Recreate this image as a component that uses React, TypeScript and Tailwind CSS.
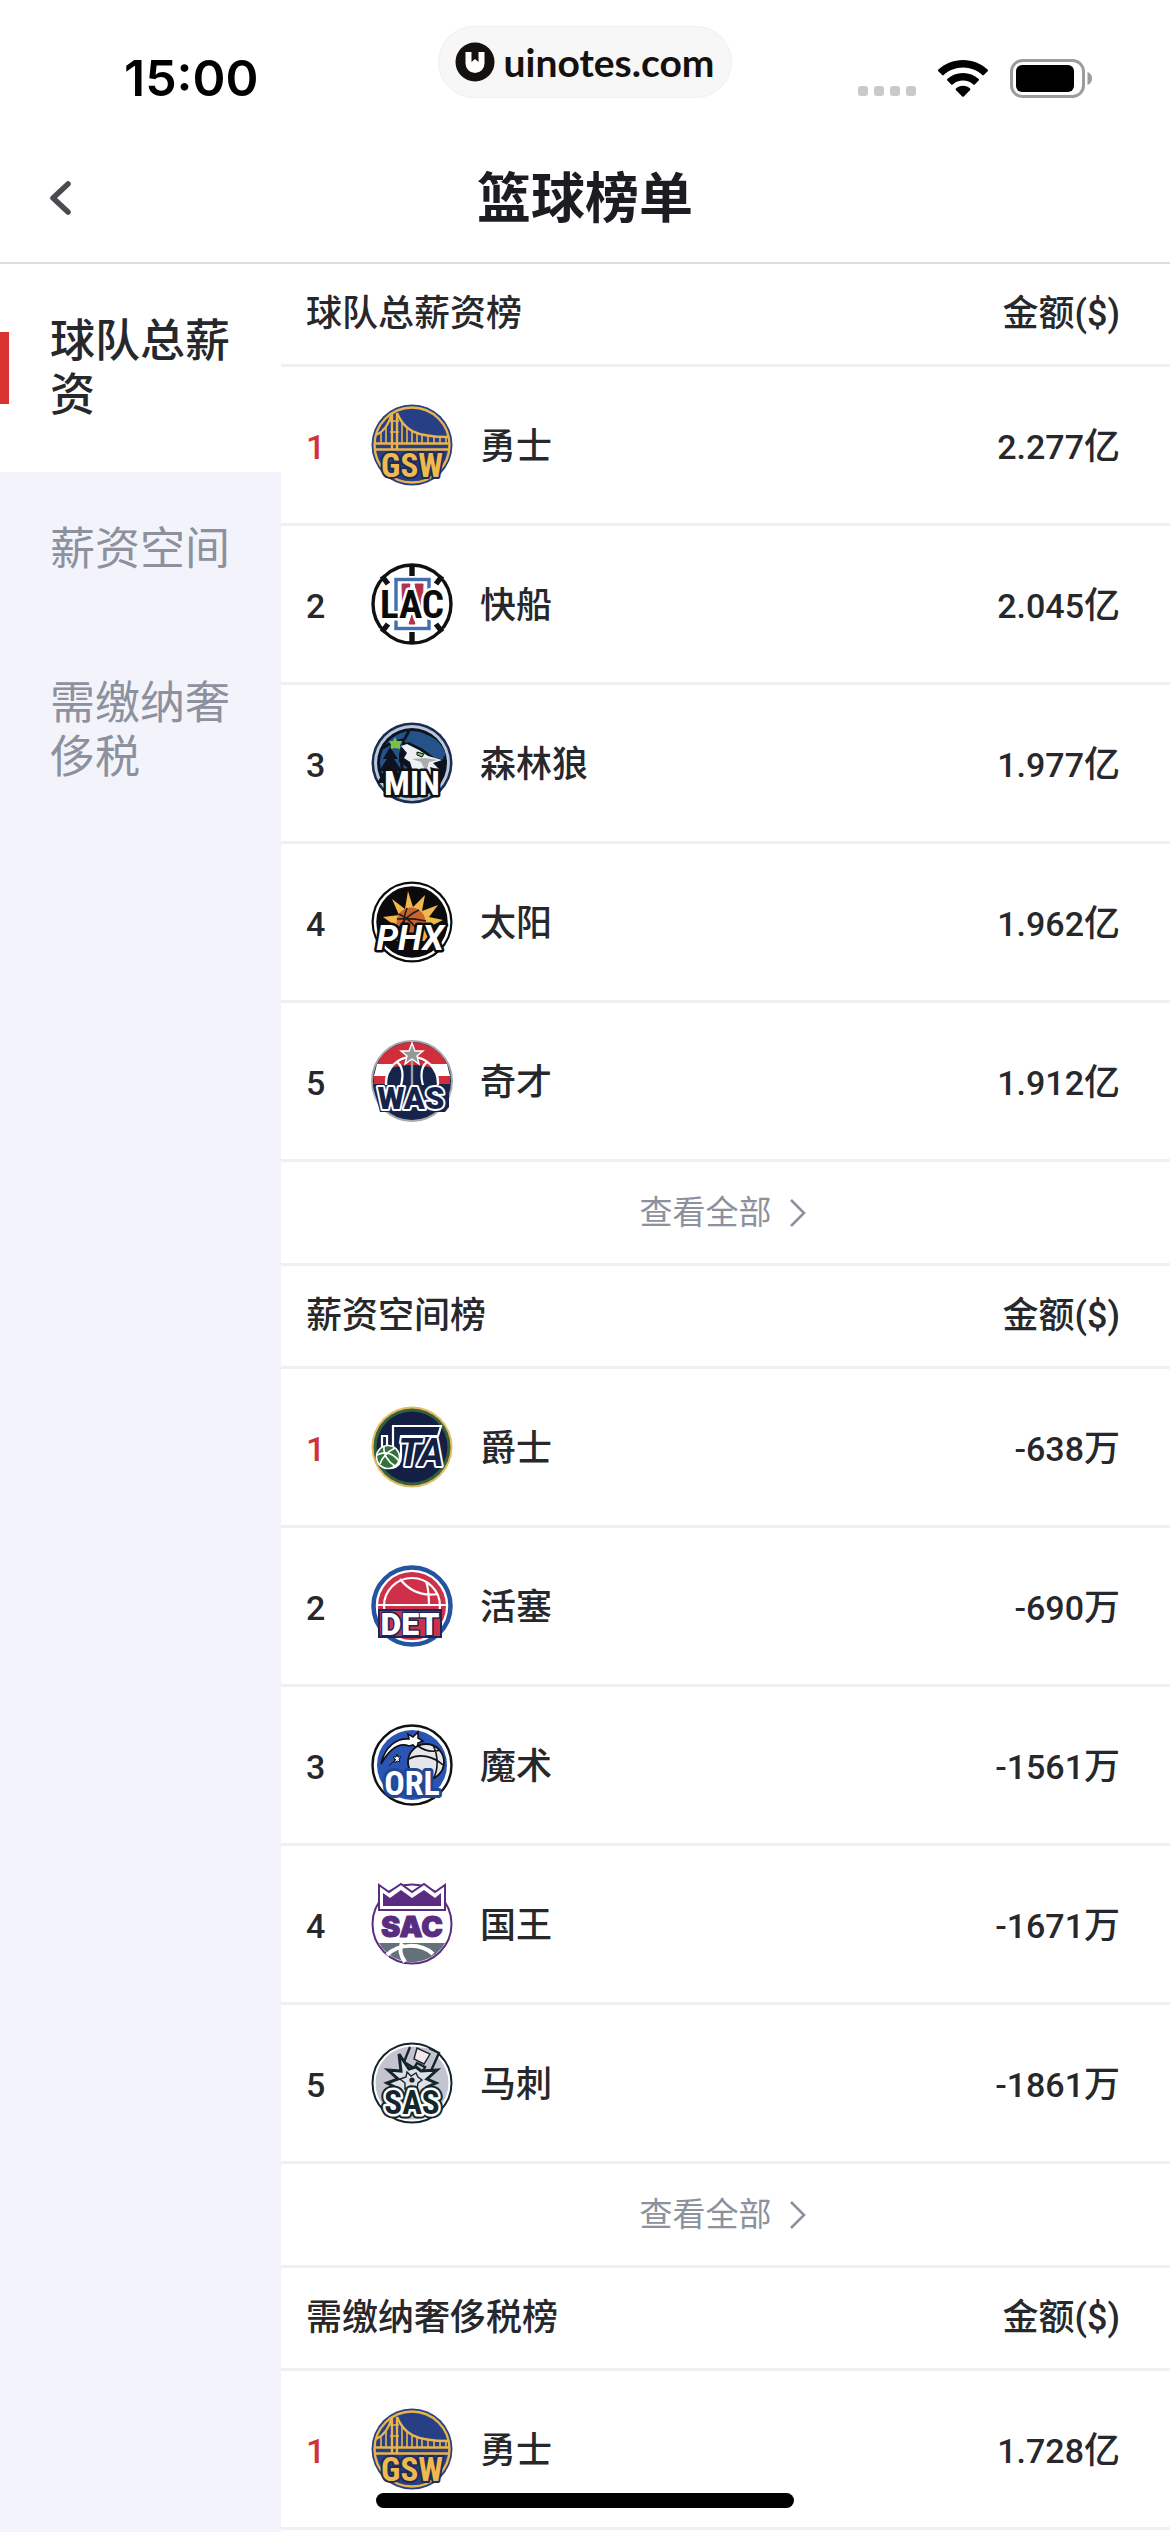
import { ReactNode } from "react";

type Team = {
  name: string;
  amount: string;
  unit: string;
  logo: ReactNode;
};

type Ranking = {
  title: string;
  teams: Team[];
  hasMore: boolean;
};

const Badge = ({ children }: { children: ReactNode }) => {
  return (
    <svg
      viewBox="0 0 82 82"
      className="block size-[82px] overflow-visible"
      aria-hidden="true"
    >
      {children}
    </svg>
  );
};

const Letters = ({
  x = 41,
  y,
  size,
  fill,
  outline,
  width = 3,
  className = "font-['Liberation_Sans_Narrow','Roboto_Condensed',Roboto,sans-serif] font-bold",
  children,
}: {
  x?: number;
  y: number;
  size: number;
  fill: string;
  outline: string;
  width?: number;
  className?: string;
  children: string;
}) => {
  return (
    <text
      x={x}
      y={y}
      fontSize={size}
      textAnchor="middle"
      fill={fill}
      stroke={outline}
      strokeWidth={width}
      paintOrder="stroke"
      strokeLinejoin="round"
      className={className}
    >
      {children}
    </text>
  );
};

const Warriors = () => (
  <Badge>
    <circle cx="41" cy="41" r="40.5" fill="#263f85" />
    <circle cx="41" cy="41" r="37.5" fill="none" stroke="#e9b44c" strokeWidth="2.4" />
    <g fill="none" stroke="#e9b44c">
      <path d="M4 39.5h74M5 45.5h72" strokeWidth="2.6" />
      <path d="M21 9v37M26 9v37" strokeWidth="2.4" />
      <path d="M19 17h9M19 28h9" strokeWidth="1.5" />
      <path d="M26 9C33 26 44 33 77 33" strokeWidth="2.4" />
      <path d="M21 9C18 20 12 28 5 31" strokeWidth="2.2" />
      <path
        d="M10 29v10M15 23v16M31 18v21M36 24v15M41 28v11M46 30v9M51 31v8M57 32v7M63 33v6M69 33v6M75 33v6"
        strokeWidth="1.6"
      />
    </g>
    <Letters y={73} size={33} fill="#f0b94d" outline="#1d2c5c" width={4}>
      GSW
    </Letters>
  </Badge>
);

const Clippers = () => (
  <Badge>
    <circle cx="41" cy="41" r="39" fill="#fff" stroke="#111" strokeWidth="3.4" />
    <path
      d="M41 2v11M41 69v11M11 13l6 8M71 13l-6 8M11 69l6-8M71 69l-6-8"
      stroke="#111"
      strokeWidth="5.4"
    />
    <rect x="25" y="16.5" width="33" height="49" fill="#fff" stroke="#426fae" strokeWidth="3.4" />
    <path d="M31 21h8l-7 34zM52 21h-8l7 34zM41 52l3 9h-6z" fill="#b5304a" stroke="#b5304a" />
    <Letters y={55} size={39} fill="#0b0b0b" outline="#fff" width={5}>
      LAC
    </Letters>
  </Badge>
);

const Timberwolves = () => (
  <Badge>
    <circle cx="41" cy="41" r="40.5" fill="#1b2b52" />
    <circle cx="41" cy="41" r="38" fill="#b9c8da" />
    <circle cx="41" cy="41" r="35" fill="#0c1320" />
    <circle cx="41" cy="41" r="32" fill="#245289" />
    <path d="M12 26C26 16 50 12 72 30M38 9C28 24 28 50 38 72" fill="none" stroke="#0c1320" strokeWidth="3" />
    <path d="M33 20C50 18 64 26 74 35L74 30C66 12 48 8 36 16Z" fill="#245289" />
    <path d="M19 25l8 12h-4l8 12h-5l8 12H6l7-12H8l8-12h-4z" fill="#0c1320" />
    <path d="M28 32l3-10 7-2 14 7 12 9 12 2-5 19-30 4-5-16-8-5z" fill="#0c1320" />
    <path d="M30 24l6-2 12 6 9 6 14 4-9 3 7 7-10-3 3 11H44l-5-16-6-4 3-5z" fill="#eef0f2" />
    <path d="M54 36l13 2-9 2-3 10-5-10-9-3z" fill="#a9adb3" />
    <path d="M46 30l7 2-2 3-5-2z" fill="#7fbf4a" stroke="#0c1320" />
    <path d="M24 15l2 4 5 0-2 4 0 4-5-1-4 1 0-4-2-4 4 0z" fill="#7ac143" />
    <Letters y={73} size={34} fill="#fff" outline="#111" width={5}>
      MIN
    </Letters>
  </Badge>
);

const Suns = () => (
  <Badge>
    <circle cx="41" cy="41" r="40.5" fill="#0b0b0d" />
    <circle cx="41" cy="41" r="37" fill="none" stroke="#fff" strokeWidth="2.6" />
    <path
      d="M37 10l5 16 12-12-3 16 16-6-9 12 14 3-14 7 8 14-52 0 12-14-14-10 16-2-7-16 13 10z"
      fill="#f0b84a"
    />
    <circle cx="40" cy="41" r="14.5" fill="#c8652e" />
    <path
      d="M26 38c10-1 20 0 29 2M36 27c-4 9-4 20 0 28M48 29c-9 4-16 10-20 18M28 33c8 4 16 11 20 19"
      fill="none"
      stroke="#241a16"
      strokeWidth="1.6"
    />
    <Letters
      x={39}
      y={69}
      size={35}
      fill="#fff"
      outline="#0b0b0d"
      width={5}
      className="font-[Roboto,sans-serif] font-bold italic"
    >
      PHX
    </Letters>
  </Badge>
);

const Wizards = () => (
  <Badge>
    <circle cx="41" cy="41" r="40" fill="#16244b" stroke="#a7a9ad" strokeWidth="2" />
    <path d="M6 24a39 39 0 0 1 70 0z" fill="#cf2e3a" />
    <path d="M6 24h70l3 12H3z" fill="#fff" />
    <path d="M3 36h76v8H3z" fill="#cf2e3a" />
    <circle cx="41" cy="43" r="26" fill="#16244b" stroke="#fff" strokeWidth="2.4" />
    <path d="M21 28C32 24 50 24 61 28A26 26 0 0 0 21 28z" fill="#cf2e3a" />
    <path d="M26 22c8 6 6 20 2 28M56 22c-8 6-6 20-2 28" fill="none" stroke="#fff" strokeWidth="2.2" />
    <path d="M41 20v27" stroke="#9c9fa4" strokeWidth="2.4" />
    <path
      d="M41 3l3 8 8 0-6 5 2 8-7-5-7 5 2-8-6-5 8 0z"
      fill="#939a9c"
      stroke="#fff"
      strokeWidth="1.4"
    />
    <path d="M2 45h76v22l-4 5H9z" fill="#16244b" />
    <Letters
      x={40}
      y={69}
      size={31}
      fill="#16244b"
      outline="#fff"
      width={4}
      className="font-[Roboto,sans-serif] font-black"
    >
      WAS
    </Letters>
  </Badge>
);

const Jazz = () => (
  <Badge>
    <circle cx="41" cy="41" r="40.5" fill="#e5bb62" />
    <circle cx="41" cy="41" r="38.5" fill="#35603a" />
    <circle cx="41" cy="41" r="35.5" fill="#141f45" />
    <path
      d="M11 44V30h5v12M22 42V20h48l-3 10H30v20c0 8-4 11-9 12"
      fill="none"
      stroke="#fff"
      strokeWidth="2.2"
    />
    <Letters
      x={50}
      y={60}
      size={38}
      fill="#141f45"
      outline="#fff"
      width={4}
      className="font-['Liberation_Sans_Narrow',Roboto,sans-serif] font-bold italic"
    >
      TA
    </Letters>
    <circle cx="17" cy="51" r="11.5" fill="#35703f" stroke="#fff" strokeWidth="1.6" />
    <path
      d="M6 49c8-4 16-2 22 6M13 40c-1 8 4 16 11 20M24 42c-8 4-13 10-15 16"
      fill="none"
      stroke="#fff"
      strokeWidth="1.6"
    />
  </Badge>
);

const Pistons = () => (
  <Badge>
    <circle cx="41" cy="41" r="38.5" fill="#fff" stroke="#2454a0" strokeWidth="4.5" />
    <circle cx="41" cy="41" r="34" fill="#cd3048" />
    <circle cx="41" cy="41" r="28" fill="none" stroke="#fff" strokeWidth="2.2" />
    <path
      d="M6 40h70M29 14c8 10 20 18 38 15M55 16c3 9 3 17 3 25"
      fill="none"
      stroke="#fff"
      strokeWidth="2.2"
    />
    <path d="M7 44h64v29H7z" fill="#1f2457" />
    <path d="M9 46h60v25H9z" fill="#cd3048" />
    <Letters
      x={39}
      y={70}
      size={32}
      fill="#fff"
      outline="#1f2457"
      width={3}
      className="font-[Roboto,sans-serif] font-black"
    >
      DET
    </Letters>
  </Badge>
);

const Magic = () => (
  <Badge>
    <circle cx="41" cy="41" r="39.5" fill="#fff" stroke="#101114" strokeWidth="2.4" />
    <circle cx="41" cy="41" r="35" fill="#2b55b4" />
    <path
      d="M10 40C14 22 26 14 38 15l-1-5 5 3 5-5 0 6 5 3-5 2-1 6-4-4-4 1C28 18 18 26 10 40z"
      fill="#fff"
      stroke="#101114"
      strokeWidth="1.6"
    />
    <path d="M18 42l7-7M26 30l1 3 3 0-2 2 1 3-3-1-2 2 0-4-2-2 3 0z" fill="#fff" stroke="#101114" />
    <circle cx="55" cy="38" r="18" fill="#e4e6ea" stroke="#101114" strokeWidth="1.8" />
    <path
      d="M38 35c10-6 24-3 34 6M47 22c8 6 16 6 22 4M62 21c6 12 5 26 0 34"
      fill="none"
      stroke="#101114"
      strokeWidth="1.6"
    />
    <Letters y={71} size={34} fill="#fff" outline="#214896" width={6}>
      ORL
    </Letters>
  </Badge>
);

const Kings = () => (
  <Badge>
    <circle cx="41" cy="41" r="39.5" fill="#fff" stroke="#5a2d82" strokeWidth="2" />
    <path d="M8 2l10 7 12-8 11 8 12-8 11 8 10-7v25H8z" fill="#fff" stroke="#5a2d82" strokeWidth="2" />
    <path d="M12 10l7 5 11-8 11 8 12-8 11 8 6-5v13H12z" fill="#5a2d82" />
    <path d="M8 60h66a38 38 0 0 1-66 0z" fill="#64717b" />
    <path
      d="M16 72c12-12 34-12 46-1M31 60c-3 6-2 12 3 19"
      fill="none"
      stroke="#fff"
      strokeWidth="4"
    />
    <Letters
      y={54}
      size={29}
      fill="#5a2d82"
      outline="#5a2d82"
      width={1}
      className="font-[Inter,Roboto,sans-serif] font-black"
    >
      SAC
    </Letters>
  </Badge>
);

const Spurs = () => (
  <Badge>
    <circle cx="41" cy="41" r="39.5" fill="#fff" stroke="#14252c" strokeWidth="2" />
    <circle cx="41" cy="41" r="36.5" fill="#c3c4cf" />
    <path
      d="M39 5l-6 15 10 6 3-5 8 4-3 6 8 0 9-20-10-5"
      fill="#c3c4cf"
      stroke="#14252c"
      strokeWidth="2.4"
    />
    <path d="M46 6l-3 11 10 5 6-10z" fill="#f3e9ec" stroke="#14252c" strokeWidth="1.4" />
    <path
      d="M28 12l10 15 7-2 5 4 16-1-10 9 9 4-9 4 4 12H22l6-10-12-6 11-4-10-9 13 1z"
      fill="#dfe0e6"
      stroke="#14252c"
      strokeWidth="3"
    />
    <path
      d="M36 30l4 4 5-3 2 4 4 3-4 3-1 6-6-3-6 3 0-6-5-4 6-2z"
      fill="none"
      stroke="#14252c"
      strokeWidth="1.4"
    />
    <circle cx="41" cy="38" r="2.6" fill="#14252c" />
    <Letters y={72} size={33} fill="#14252c" outline="#14252c" width={9}>
      SAS
    </Letters>
    <Letters y={72} size={33} fill="#14252c" outline="#fff" width={5}>
      SAS
    </Letters>
  </Badge>
);

const rankings: Ranking[] = [
  {
    title: "球队总薪资榜",
    hasMore: true,
    teams: [
      { name: "勇士", amount: "2.277", unit: "亿", logo: <Warriors /> },
      { name: "快船", amount: "2.045", unit: "亿", logo: <Clippers /> },
      { name: "森林狼", amount: "1.977", unit: "亿", logo: <Timberwolves /> },
      { name: "太阳", amount: "1.962", unit: "亿", logo: <Suns /> },
      { name: "奇才", amount: "1.912", unit: "亿", logo: <Wizards /> },
    ],
  },
  {
    title: "薪资空间榜",
    hasMore: true,
    teams: [
      { name: "爵士", amount: "-638", unit: "万", logo: <Jazz /> },
      { name: "活塞", amount: "-690", unit: "万", logo: <Pistons /> },
      { name: "魔术", amount: "-1561", unit: "万", logo: <Magic /> },
      { name: "国王", amount: "-1671", unit: "万", logo: <Kings /> },
      { name: "马刺", amount: "-1861", unit: "万", logo: <Spurs /> },
    ],
  },
  {
    title: "需缴纳奢侈税榜",
    hasMore: false,
    teams: [{ name: "勇士", amount: "1.728", unit: "亿", logo: <Warriors /> }],
  },
];

const tabs = ["球队总薪资", "薪资空间", "需缴纳奢侈税"];

const StatusBar = () => {
  return (
    <div className="grid h-[134px] grid-cols-3 px-[78px] pt-[26px]">
      <div className="flex h-[104px] items-center pl-[46px] font-[Inter,sans-serif] text-[50px] font-semibold text-black">
        15:00
      </div>
      <div className="flex h-[72px] w-[294px] items-center justify-center gap-2 justify-self-center rounded-full border border-[#efefef] bg-[#f7f7f7]">
        <svg viewBox="0 0 40 40" className="size-10" aria-hidden="true">
          <circle cx="20" cy="20" r="19.5" fill="#15110f" />
          <path
            d="M10.500 10h6v10l3.500-3 3.500 3V10h6v11.500a9.500 9.500 0 0 1-19 0z"
            fill="#fff"
          />
        </svg>
        <span className="font-[Lato,sans-serif] text-[39px] leading-10 font-bold text-[#15110f]">
          uinotes.com
        </span>
      </div>
      <div className="flex h-[104px] items-center justify-end gap-[22px]">
        <svg viewBox="0 0 58 38" className="h-[38px] w-[58px]" aria-hidden="true">
          <g fill="#c9c9c9">
            <rect x="0" y="27" width="10" height="10" rx="3" />
            <rect x="16" y="27" width="10" height="10" rx="3" />
            <rect x="32" y="27" width="10" height="10" rx="3" />
            <rect x="48" y="27" width="10" height="10" rx="3" />
          </g>
        </svg>
        <svg viewBox="0 0 50 37" className="h-[37px] w-[50px]" aria-hidden="true">
          <path d="M25 0C15.500 0 6.800 3.600.4 9.600c-.5.5-.5 1.100-.1 1.600l3.900 3.900c.4.4 1 .4 1.500 0C10.900 10.400 17.600 7.600 25 7.600s14.100 2.800 19.300 7.500c.5.4 1.100.4 1.500 0l3.900-3.900c.4-.5.4-1.100-.1-1.600C43.200 3.600 34.500 0 25 0z" />
          <path d="M25 13c-6 0-11.500 2.300-15.700 6-.5.500-.5 1.100 0 1.600l3.900 3.900c.4.400 1 .4 1.500 0 2.700-2.400 6.300-3.900 10.300-3.900s7.600 1.500 10.300 3.900c.5.400 1.100.4 1.500 0l3.900-3.900c.5-.5.5-1.100 0-1.600C36.500 15.300 31 13 25 13z" />
          <path d="M25 25.800c-2.700 0-5.100 1-7 2.600-.5.400-.5 1-.1 1.500l6.300 6.500c.5.500 1.100.5 1.600 0l6.300-6.500c.4-.5.4-1.100-.1-1.500-1.900-1.600-4.300-2.600-7-2.600z" />
        </svg>
        <svg viewBox="0 0 82 39" className="h-[39px] w-[82px]" aria-hidden="true">
          <rect x="1.500" y="1.500" width="72" height="36" rx="11" fill="none" stroke="#9c9c9c" strokeWidth="3" />
          <rect x="6" y="6" width="58" height="27" rx="6" />
          <path d="M77.500 13c3 1 4.500 3.500 4.500 6.500S80.500 25 77.500 26z" fill="#9c9c9c" />
        </svg>
      </div>
    </div>
  );
};

const NavBar = () => {
  return (
    <div className="grid h-[130px] grid-cols-3 items-center border-b-2 border-[#dcdddf] px-10">
      <button type="button" aria-label="返回" className="justify-self-start">
        <svg viewBox="0 0 40 40" className="size-10" fill="none" aria-hidden="true">
          <path
            d="M28 6L13 20l15 14"
            stroke="#4a4b50"
            strokeWidth="5.500"
            strokeLinecap="round"
            strokeLinejoin="round"
          />
        </svg>
      </button>
      <h1 className="pt-1 text-center text-[54px] leading-[64px] font-bold whitespace-nowrap text-[#1c1d21]">
        篮球榜单
      </h1>
    </div>
  );
};

const Sidebar = () => {
  return (
    <nav className="w-[281px] shrink-0 bg-[#f3f4fb]">
      {tabs.map((tab, index) => (
        <button
          key={tab}
          type="button"
          className={
            index === 0
              ? "relative block w-full bg-white px-[50px] pt-[51px] pb-[49px] text-left text-[45px] leading-[54px] font-medium text-[#27282c]"
              : "relative block w-full px-[50px] pt-[51px] pb-[49px] text-left text-[45px] leading-[54px] font-normal text-[#8d919e]"
          }
        >
          {index === 0 && (
            <span className="absolute top-1/2 left-0 h-[72px] w-[9px] -translate-y-1/2 bg-[#d93430]" />
          )}
          {tab}
        </button>
      ))}
    </nav>
  );
};

const RankingTable = ({ ranking }: { ranking: Ranking }) => {
  return (
    <section>
      <table className="w-full border-separate border-spacing-0 text-[36px] font-medium text-[#27282c]">
        <thead>
          <tr className="h-[103px]">
            <th
              colSpan={3}
              className="border-b-3 border-[#eff0f2] pl-[25px] text-left font-medium"
            >
              {ranking.title}
            </th>
            <th className="border-b-3 border-[#eff0f2] pr-[50px] text-right font-medium">
              金额($)
            </th>
          </tr>
        </thead>
        <tbody>
          {ranking.teams.map((team, index) => (
            <tr key={team.name} className="h-[159px]">
              <td
                className={
                  index === 0
                    ? "w-[90px] border-b-3 border-[#eff0f2] pt-1 pl-[25px] text-[34px] text-[#d0343a]"
                    : "w-[90px] border-b-3 border-[#eff0f2] pt-1 pl-[25px] text-[34px]"
                }
              >
                {index + 1}
              </td>
              <td className="w-[109px] border-b-3 border-[#eff0f2]">{team.logo}</td>
              <td className="border-b-3 border-[#eff0f2] pt-1">{team.name}</td>
              <td className="border-b-3 border-[#eff0f2] pt-1 pr-[50px] text-right">
                <span className="text-[34px]">{team.amount}</span>
                {team.unit}
              </td>
            </tr>
          ))}
        </tbody>
      </table>
      {ranking.hasMore && (
        <button
          type="button"
          className="flex h-[104px] w-full items-center justify-center gap-3 border-b-3 border-[#eff0f2] text-[33px] text-[#8d919e]"
        >
          查看全部
          <svg viewBox="0 0 28 28" className="size-7" fill="none" aria-hidden="true">
            <path d="M7 1l13 13L7 27" stroke="#8d919e" strokeWidth="2.600" />
          </svg>
        </button>
      )}
    </section>
  );
};

const App = () => {
  return (
    <div className="flex min-h-screen flex-col bg-white font-[Roboto,'Noto_Sans_CJK_SC',sans-serif]">
      <header>
        <StatusBar />
        <NavBar />
      </header>
      <div className="flex grow">
        <Sidebar />
        <main className="min-w-0 grow">
          {rankings.map((ranking) => (
            <RankingTable key={ranking.title} ranking={ranking} />
          ))}
        </main>
      </div>
      <div className="fixed bottom-6 left-1/2 h-[15px] w-[418px] -translate-x-1/2 rounded-full bg-black" />
    </div>
  );
};

export default App;
